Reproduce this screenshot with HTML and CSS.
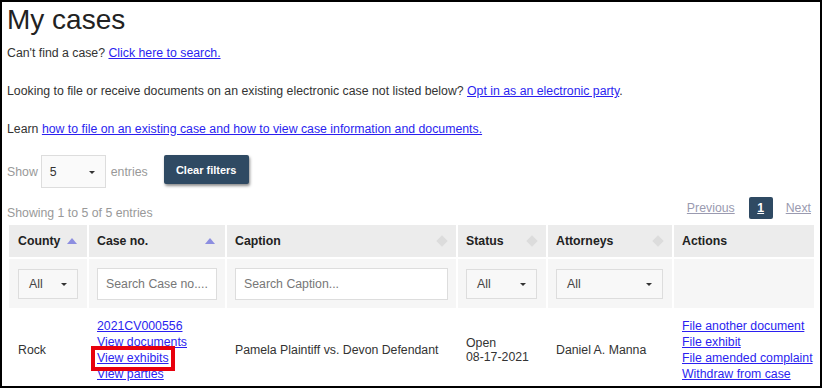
FILE: index.html
```
<!DOCTYPE html>
<html>
<head>
<meta charset="utf-8">
<link rel="stylesheet" href="styles.css">
</head>
<body>
<div class="frame">
  <h1 class="title">My cases</h1>
  <p class="line l1">Can't find a case? <a href="#">Click here to search.</a></p>
  <p class="line l2">Looking to file or receive documents on an existing electronic case not listed below? <a href="#">Opt in as an electronic party</a>.</p>
  <p class="line l3">Learn <a href="#">how to file on an existing case and how to view case information and documents.</a></p>
  <div class="controls">
    <span class="muted">Show</span>
    <div class="sel len"><span>5</span><i class="caret"></i></div>
    <span class="muted">entries</span>
    <button class="btn">Clear filters</button>
  </div>
  <div class="infobar">
    <span class="muted">Showing 1 to 5 of 5 entries</span>
    <div class="pager">
      <a class="pg dis">Previous</a>
      <a class="pg cur">1</a>
      <a class="pg dis">Next</a>
    </div>
  </div>
  <table class="tbl">
    <colgroup>
      <col style="width:80px"><col style="width:138px"><col style="width:231px"><col style="width:90px"><col style="width:126px"><col>
    </colgroup>
    <thead>
      <tr class="hdr">
        <th><span>County</span><i class="tri"></i></th>
        <th><span>Case no.</span><i class="tri"></i></th>
        <th><span>Caption</span><i class="dia"></i></th>
        <th><span>Status</span><i class="dia"></i></th>
        <th><span>Attorneys</span><i class="dia"></i></th>
        <th><span>Actions</span></th>
      </tr>
      <tr class="flt">
        <td><div class="sel f1"><span>All</span><i class="caret"></i></div></td>
        <td><div class="inp">Search Case no....</div></td>
        <td><div class="inp">Search Caption...</div></td>
        <td><div class="sel f2"><span>All</span><i class="caret"></i></div></td>
        <td><div class="sel f3"><span>All</span><i class="caret"></i></div></td>
        <td></td>
      </tr>
    </thead>
    <tbody>
      <tr class="row">
        <td>Rock</td>
        <td class="links">
          <a href="#">2021CV000556</a>
          <a href="#">View documents</a>
          <a href="#" class="hl">View exhibits</a>
          <a href="#">View parties</a>
        </td>
        <td>Pamela Plaintiff vs. Devon Defendant</td>
        <td>Open<br>08-17-2021</td>
        <td>Daniel A. Manna</td>
        <td class="links">
          <a href="#">File another document</a>
          <a href="#">File exhibit</a>
          <a href="#">File amended complaint</a>
          <a href="#">Withdraw from case</a>
        </td>
      </tr>
    </tbody>
  </table>
</div>
</body>
</html>
```
FILE: styles.css
```
* { box-sizing: border-box; }
html, body { margin: 0; padding: 0; background: #fff; }
body { font-family: "Liberation Sans", Arial, sans-serif; font-size: 12.3px; color: #333; }
.frame {
  width: 822px; height: 388px; overflow: hidden;
  border: 2px solid #000; padding: 0 5px;
}
a { color: #2b1ff0; text-decoration: underline; }
.title { margin: 1px 0 0 0; font-size: 28px; font-weight: normal; color: #222; line-height: 34px; }
.line { margin: 0; line-height: 16px; }
.l1 { margin-top: 8px; }
.l2 { margin-top: 22px; }
.l3 { margin-top: 22px; }
.muted { color: #999; }
.controls { display: flex; align-items: center; margin-top: 18px; height: 33px; }
.sel {
  position: relative; display: flex; align-items: center;
  border: 1px solid #ddd; background: #fafafa; color: #333;
  padding-left: 8px;
}
.sel.len { width: 65px; height: 33px; margin: 0 5px 0 3px; }
.caret {
  position: absolute; right: 10px; top: 50%; margin-top: -1px;
  border-left: 3px solid transparent; border-right: 3px solid transparent; border-top: 3px solid #333;
}
.btn {
  margin-left: 16px; margin-top: -4px; height: 29px; width: 85px;
  background: #2f4a63; color: #fff; border: 0; border-radius: 2px;
  font-family: "Liberation Sans", Arial, sans-serif; font-size: 11px; font-weight: bold;
  box-shadow: 1px 2px 3px rgba(0,0,0,0.45);
}
.infobar { display: flex; justify-content: space-between; align-items: flex-end; margin-top: 9px; height: 22px; }
.infobar .muted { position: relative; top: 1px; }
.pager { display: flex; align-items: center; margin-right: 4px; }
.pg.dis { color: #9a9ab0; }
.pg.cur {
  background: #2f4a63; color: #fff; font-weight: bold; width: 24px; height: 22px;
  display: flex; align-items: center; justify-content: center; border-radius: 2px;
  margin: 0 13px 0 14px;
}
.tbl {
  margin-top: 4px; width: 809px; table-layout: fixed; border-collapse: collapse;
  border: 1px solid #e6e6e6;
}
.tbl th, .tbl td { border: 2px solid #fff; padding: 0 8px; text-align: left; vertical-align: middle; }
.tbl th:first-child, .tbl td:first-child { padding-left: 9px; }
.tbl th { height: 34px; background: #ececec; font-weight: bold; color: #222; position: relative; }
.tri {
  position: absolute; right: 10px; top: 13px;
  border-left: 5px solid transparent; border-right: 5px solid transparent; border-bottom: 6px solid #8c8ee0;
}
.dia {
  position: absolute; right: 10px; top: 12px; width: 8px; height: 8px;
  background: #dcdcdc; transform: rotate(45deg);
}
.flt td { height: 51px; background: #f6f6f6; }
.flt .sel { height: 30px; color: #444; padding-left: 10px; background: #f8f8f8; }
.sel.f1 { width: 60px; }
.sel.f2 { width: 71px; }
.sel.f3 { width: 107px; }
.inp {
  height: 32px; border: 1px solid #ddd; background: #fff; color: #777;
  display: flex; align-items: center; padding-left: 8px; white-space: nowrap; overflow: hidden;
}
.row td { height: 82px; background: #fff; color: #333; border-color: #fff; }
.links a { display: block; width: max-content; line-height: 16px; }
.hl { position: relative; }
.hl::after {
  content: ""; position: absolute; left: -6px; right: -6px; top: -4px; bottom: -5px;
  border: 4px solid #e8000d;
}
```
